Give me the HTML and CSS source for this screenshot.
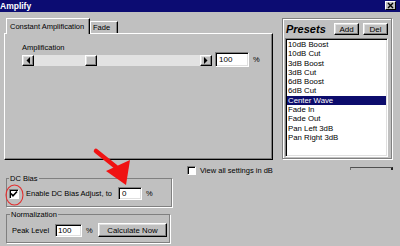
FILE: index.html
```html
<!DOCTYPE html>
<html>
<head>
<meta charset="utf-8">
<link rel="stylesheet" href="styles.css">
</head>
<body>
<div class="titlebar">
  <span class="title">Amplify</span>
  <span class="close"><svg width="9" height="7" viewBox="0 0 9 7"><path d="M2 1 L7 6 M7 1 L2 6" stroke="#000" stroke-width="1.4"/></svg></span>
</div>
<div class="main">
  <div class="tabs">
    <div class="tabrow">
      <div class="tab active">Constant Amplification</div>
      <div class="tab fade">Fade</div>
    </div>
    <div class="panel">
      <div class="lbl">Amplification</div>
      <div class="amprow">
        <div class="slider">
          <div class="sbtn"><svg width="4" height="7" viewBox="0 0 4 7"><polygon points="4,0 4,7 0.5,3.5" fill="#000"/></svg></div>
          <div class="track"><div class="thumb"></div></div>
          <div class="sbtn"><svg width="4" height="7" viewBox="0 0 4 7"><polygon points="0,0 0,7 3.5,3.5" fill="#000"/></svg></div>
        </div>
        <div class="field amp">100</div>
        <span class="pct">%</span>
      </div>
    </div>
  </div>
  <div class="presets">
    <div class="phead">
      <span class="ptitle">Presets</span>
      <div class="btn small add">Add</div>
      <div class="btn small">Del</div>
    </div>
    <ul class="list">
      <li>10dB Boost</li>
      <li>10dB Cut</li>
      <li>3dB Boost</li>
      <li>3dB Cut</li>
      <li>6dB Boost</li>
      <li>6dB Cut</li>
      <li class="sel">Center Wave</li>
      <li>Fade In</li>
      <li>Fade Out</li>
      <li>Pan Left 3dB</li>
      <li>Pan Right 3dB</li>
    </ul>
  </div>
</div>
<div class="viewrow">
  <span class="chk"></span>
  <span class="viewlbl">View all settings in dB</span>
  <span class="partial"></span>
</div>
<fieldset class="grp dc">
  <legend>DC Bias</legend>
  <div class="row dcrow">
    <span class="chk big"><svg width="8" height="8" viewBox="0 0 8 8"><path d="M1 3.5 L3 5.8 L7 1.5" stroke="#000" stroke-width="1.6" fill="none"/></svg></span>
    <span class="dctext">Enable DC Bias Adjust, to</span>
    <div class="field dcval">0</div>
    <span class="pct">%</span>
  </div>
</fieldset>
<fieldset class="grp norm">
  <legend>Normalization</legend>
  <div class="row normrow">
    <span class="peak">Peak Level</span>
    <div class="field nval">100</div>
    <span class="pct npct">%</span>
    <div class="btn calc">Calculate Now</div>
  </div>
</fieldset>
<svg class="annot" width="400" height="246" viewBox="0 0 400 246">
  <ellipse cx="14.5" cy="195" rx="8.5" ry="10" fill="none" stroke="#e23030" stroke-width="1.1"/>
  <path d="M96 151 L116 167" stroke="#f01212" stroke-width="4.5" stroke-linecap="round"/>
  <polygon points="106,171 130,160 126,185" fill="#f01212"/>
</svg>
</body>
</html>
```

FILE: styles.css
```css
* { box-sizing: border-box; }
html, body { margin: 0; padding: 0; }
body {
  width: 400px;
  height: 246px;
  overflow: hidden;
  position: relative;
  background: #c0c0c0;
  font-family: "Liberation Sans", Arial, sans-serif;
  font-size: 7.5px;
  color: #000;
}
.titlebar {
  height: 12px;
  background: #0c0c72;
  display: flex;
  justify-content: space-between;
  align-items: flex-start;
}
.title {
  color: #fff;
  font-weight: bold;
  font-size: 8.5px;
  line-height: 12px;
  margin-left: 0;
}
.close {
  width: 11px;
  height: 9px;
  margin: 1px 4px 0 0;
  background: #c0c0c0;
  border: 1px solid;
  border-color: #fff #000 #000 #fff;
  display: flex;
  align-items: center;
  justify-content: center;
}
.main {
  display: flex;
  align-items: flex-start;
  padding: 6px 0 0 4px;
}
.tabs { width: 269px; }
.tabrow {
  display: flex;
  align-items: flex-end;
  height: 15px;
  padding-left: 2px;
  position: relative;
  z-index: 1;
}
.tab {
  border: 1px solid;
  border-bottom: none;
  border-color: #fff #000 transparent #fff;
  box-shadow: inset -1px 0 #808080;
  background: #c0c0c0;
  line-height: 9px;
  white-space: nowrap;
}
.tab.active {
  width: 84px;
  height: 16px;
  margin-bottom: -1px;
  padding: 3px 0 0 3px;
}
.tab.fade {
  width: 28px;
  height: 12px;
  padding: 1px 0 0 2px;
}
.panel {
  height: 127px;
  border: 1px solid;
  border-color: #fff #000 #000 #fff;
  box-shadow: inset -1px -1px #808080;
  padding: 9px 0 0 17px;
}
.lbl { line-height: 9px; }
.amprow {
  display: flex;
  align-items: center;
  height: 15px;
}
.slider {
  display: flex;
  width: 190px;
  height: 11px;
  margin-top: 2px;
}
.sbtn, .thumb, .btn {
  background: #c0c0c0;
  border: 1px solid;
  border-color: #fff #000 #000 #fff;
  box-shadow: inset -1px -1px #808080, inset 1px 1px #dfdfdf;
}
.sbtn {
  width: 12px;
  height: 11px;
  display: flex;
  align-items: center;
  justify-content: center;
}
.track {
  flex: 1;
  display: flex;
  padding-left: 51px;
  background: #e2e2e2;
}
.thumb { width: 12px; height: 11px; }
.field {
  background: #fff;
  border: 1px solid;
  border-color: #808080 #fff #fff #808080;
  box-shadow: inset 1px 1px #000, inset -1px -1px #dfdfdf;
  font-size: 8px;
  padding-left: 3px;
  display: flex;
  align-items: center;
}
.amp { width: 34px; height: 15px; margin-left: 3px; }
.pct { margin-left: 4px; }
.presets {
  width: 110px;
  height: 141px;
  margin-left: 9px;
  border: 1px solid #808080;
  box-shadow: inset 1px 1px #fff, 1px 1px #fff;
  padding: 4px 3px 1px 2px;
}
.phead {
  display: flex;
  align-items: center;
  height: 12px;
}
.ptitle {
  font-weight: bold;
  font-style: italic;
  font-size: 11px;
  line-height: 12px;
  margin-left: 1px;
  margin-right: auto;
}
.btn {
  display: flex;
  align-items: center;
  justify-content: center;
  white-space: nowrap;
}
.btn.small {
  width: 25px;
  height: 12px;
  font-size: 8px;
}
.btn.add { margin-right: 4px; }
.list {
  list-style: none;
  margin: 3px 0 0 0;
  height: 119px;
  background: #fff;
  border: 1px solid;
  border-color: #808080 #fff #fff #808080;
  box-shadow: inset 1px 1px #000, inset -1px -1px #dfdfdf;
  padding: 1px 1px;
  font-size: 7.8px;
  line-height: 9.3px;
}
.list li { padding-left: 1px; white-space: nowrap; }
.list li.sel { background: #0c0c6c; color: #fff; }
.viewrow {
  display: flex;
  align-items: flex-start;
  height: 8px;
  margin-top: 6px;
  padding-left: 187px;
}
.chk {
  width: 9px;
  height: 9px;
  background: #fff;
  border: 1px solid;
  border-color: #808080 #fff #fff #808080;
  box-shadow: inset 1px 1px #000;
  flex: none;
  display: flex;
  align-items: center;
  justify-content: center;
}
.chk.big { width: 10px; height: 10px; }
.viewlbl { margin-left: 4px; line-height: 9px; white-space: nowrap; }
.partial {
  width: 43px;
  height: 3px;
  margin: 1px 7px 0 auto;
  border-top: 1px solid #505050;
  border-left: 1px solid #707070;
  border-right: 2px solid #202020;
}
.grp {
  margin: 0 0 0 6px;
  border: 1px solid #808080;
  box-shadow: 1px 1px #fff;
  min-inline-size: 0;
}
.grp legend {
  padding: 0 1px;
  line-height: 9px;
}
.dc {
  width: 166px;
  padding: 4px 0 6px 2px;
}
.norm {
  width: 164px;
  margin-top: 3px;
  padding: 4px 0 5px 5px;
}
.norm legend { margin-left: -2px; }
.row { display: flex; align-items: center; }
.dcrow { height: 13px; }
.dctext { width: 99px; padding-left: 7px; white-space: nowrap; }
.dcval { width: 24px; height: 13px; }
.normrow { height: 14px; }
.peak { width: 43px; white-space: nowrap; }
.nval { width: 27px; height: 13px; padding-left: 2px; }
.npct { width: 12px; }
.calc { width: 69px; height: 14px; font-size: 7.8px; }
.annot {
  position: absolute;
  left: 0;
  top: 0;
  pointer-events: none;
}
```
